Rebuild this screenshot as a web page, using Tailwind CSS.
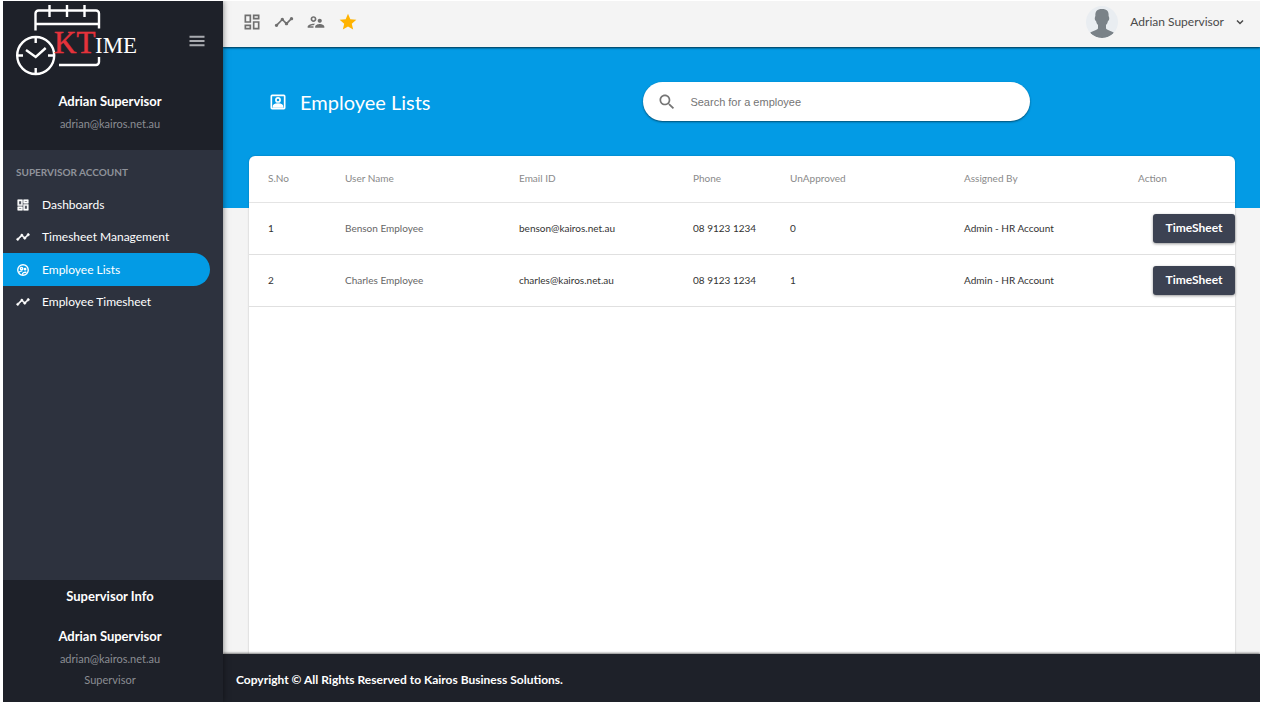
<!DOCTYPE html>
<html lang="en">
<head>
    <meta charset="UTF-8">
    <meta name="viewport" content="width=device-width, initial-scale=1.0">
    <title>KTime - Employee Lists</title>
    <script src="https://cdn.jsdelivr.net/npm/@tailwindcss/browser@4"></script>
</head>
<body class="h-screen bg-white pt-px pr-[2px] pb-[3px] pl-[3px] font-['Muli','Lato',sans-serif] text-[12px] text-[#3c4252]">

    <!-- Shared icons -->
    <svg class="hidden">
        <symbol id="dashboard" viewBox="0 0 24 24"><path d="M19 5v2h-4V5h4M9 5v6H5V5h4m10 8v6h-4v-6h4M9 17v2H5v-2h4M21 3h-8v6h8V3zM11 3H3v10h8V3zm10 8h-8v10h8V11zm-10 4H3v6h8v-6z"/></symbol>
        <symbol id="timeline" viewBox="0 0 24 24"><path d="M23 8c0 1.1-.9 2-2 2-.18 0-.35-.02-.51-.07l-3.56 3.55c.05.16.07.34.07.52 0 1.1-.9 2-2 2s-2-.9-2-2c0-.18.02-.36.07-.52l-2.55-2.55c-.16.05-.34.07-.52.07s-.36-.02-.52-.07l-4.55 4.56c.05.16.07.33.07.51 0 1.1-.9 2-2 2s-2-.9-2-2 .9-2 2-2c.18 0 .35.02.51.07l4.56-4.55C8.02 9.36 8 9.18 8 9c0-1.1.9-2 2-2s2 .9 2 2c0 .18-.02.36-.07.52l2.55 2.55c.16-.05.34-.07.52-.07s.36.02.52.07l3.55-3.56C19.02 8.35 19 8.18 19 8c0-1.1.9-2 2-2s2 .9 2 2z"/></symbol>
    </svg>

    <div class="flex h-full overflow-hidden">
        <!-- Sidebar -->
        <aside class="relative z-10 flex w-[220px] shrink-0 flex-col bg-[#2d323e] text-white shadow-[0_0_6px_rgba(0,0,0,0.5)]">
            <div class="h-[149px] bg-[#1e2129]">
                <div class="flex h-20 items-center justify-between pr-4 pl-3">
                    <svg class="h-20 w-[124px]" viewBox="0 0 124 80" fill="none" stroke="#fff" stroke-width="2.4">
                        <path d="M20.500 29.500V12.500a3 3 0 0 1 3-3h57.500a3 3 0 0 1 3 3v15M20.500 23h63.500M34.500 4v12M52 4v12M69.500 4v12M44 64h37a3 3 0 0 0 3-3v-5"/>
                        <circle cx="20.700" cy="54.500" r="18.500"/>
                        <path d="M11 49l9.700 7 10-9M20.700 37v5M20.700 67v5M3 54.500h5M33 54.500h5"/>
                        <g stroke="none" font-family="Liberation Serif, serif">
                            <text x="39" y="52" font-size="31" fill="#e5323b" stroke="#e5323b" stroke-width="0.5">KT</text>
                            <text x="80" y="52" font-size="23" fill="#fff">IME</text>
                        </g>
                    </svg>
                    <button type="button" aria-label="Toggle menu" class="text-[#a9abb0]">
                        <svg class="size-5" viewBox="0 0 24 24" fill="none" stroke="currentColor" stroke-width="2.400"><path d="M3 7h18M3 12h18M3 17h18"/></svg>
                    </button>
                </div>
                <div class="pt-3 pr-1.5 text-center text-[11px] leading-4 text-[#8b8d93]">
                    <p class="text-[13px] font-bold text-white">Adrian Supervisor</p>
                    <p class="mt-[7px]">adrian@kairos.net.au</p>
                </div>
            </div>

            <nav class="flex-1 pt-[7px]">
                <h2 class="flex h-8 items-center pb-0.5 pl-[13px] text-[10px] font-bold text-[#8f929a]">SUPERVISOR ACCOUNT</h2>
                <a href="#" class="flex h-8 items-center gap-3 pl-[13px]">
                    <svg class="size-3.5" fill="currentColor" stroke="currentColor"><use href="#dashboard"/></svg>Dashboards
                </a>
                <a href="#" class="flex h-8 items-center gap-3 pl-[13px]">
                    <svg class="size-3.5" fill="currentColor" stroke="currentColor"><use href="#timeline"/></svg>Timesheet Management
                </a>
                <a href="#" class="mr-[13px] flex h-[33px] items-center gap-3 rounded-r-full bg-[#039be5] pl-[13px]">
                    <svg class="size-3.5" viewBox="0 0 24 24" fill="none" stroke="currentColor" stroke-width="2.400">
                        <circle cx="12" cy="12" r="9"/><circle cx="9.500" cy="9.500" r="2"/><circle cx="15.500" cy="10.500" r="1.200"/><path d="M5 16c2-2 4-2.500 6-2.500M11 20c0-3 2-4.500 7-4"/>
                    </svg>Employee Lists
                </a>
                <a href="#" class="flex h-8 items-center gap-3 pl-[13px]">
                    <svg class="size-3.5" fill="currentColor" stroke="currentColor"><use href="#timeline"/></svg>Employee Timesheet
                </a>
            </nav>

            <div class="h-[122px] bg-[#1e2129] pt-2 pr-1.5 text-center text-[11px] leading-4 text-[#8b8d93]">
                <p class="text-[13px] font-bold text-white">Supervisor Info</p>
                <p class="mt-6 text-[13px] font-bold text-white">Adrian Supervisor</p>
                <p class="mt-[7px]">adrian@kairos.net.au</p>
                <p class="mt-[5px]">Supervisor</p>
            </div>
        </aside>

        <div class="flex min-w-0 flex-1 flex-col bg-[#f4f4f4]">
            <!-- Toolbar -->
            <header class="z-[5] flex h-[46px] shrink-0 items-center justify-between bg-[#f4f4f4] pr-3 pb-[5px] pl-[19px] text-[#6f6f6f] shadow-[0_1px_2px_rgba(0,0,0,0.7)]">
                <div class="flex gap-3">
                    <button type="button" aria-label="Dashboards"><svg class="size-5" fill="currentColor"><use href="#dashboard"/></svg></button>
                    <button type="button" aria-label="Timesheet Management"><svg class="size-5" fill="currentColor"><use href="#timeline"/></svg></button>
                    <button type="button" aria-label="Employees"><svg class="size-5" viewBox="0 0 24 24" fill="currentColor"><path d="M9 12c1.930 0 3.500-1.570 3.500-3.500S10.930 5 9 5 5.500 6.570 5.500 8.500 7.070 12 9 12zm0-5c.83 0 1.500.67 1.500 1.500S9.830 10 9 10s-1.500-.67-1.500-1.500S8.170 7 9 7zm.05 10H4.770c.99-.5 2.700-1 4.230-1 .11 0 .23.01.34.01.34-.73.93-1.330 1.640-1.810-.73-.13-1.420-.2-1.980-.2-2.340 0-7 1.170-7 3.500V19h7v-1.500c0-.17.02-.34.05-.5zm7.450-2.500c-1.840 0-5.500 1.010-5.500 3V19h11v-1.500c0-1.990-3.660-3-5.500-3zm1.210-1.820c.76-.43 1.290-1.240 1.290-2.180C19 9.120 17.880 8 16.500 8S14 9.120 14 10.500c0 .94.53 1.750 1.290 2.180.36.2.77.32 1.210.32s.85-.12 1.210-.32z"/></svg></button>
                    <button type="button" aria-label="Favourites" class="text-[#ffb300]"><svg class="size-5" viewBox="0 0 24 24" fill="currentColor"><path d="M12 17.270L18.180 21l-1.640-7.030L22 9.240l-7.190-.61L12 2 9.190 8.630 2 9.240l5.460 4.730L5.820 21z"/></svg></button>
                </div>
                <button type="button" class="flex items-center text-[#4a4a4a]">
                    <svg class="mr-3 size-8 rounded-full bg-[#e9edf1]" viewBox="0 0 32 32" fill="#7a8288"><path d="M16 3c5 0 7 2.500 6.600 7l.4 1c.6 1.500 0 3.500-1 4-.4 2-1.200 3-2 4v3.500c1.500 2 6 2.500 8 4.500-3 3.500-7 5-12 5s-9-1.500-12-5c2-2 6.500-2.500 8-4.500V19c-.8-1-1.600-2-2-4-1-.5-1.600-2.500-1-4l.4-1C9 5.500 11 3 16 3z"/></svg>
                    Adrian Supervisor
                    <svg class="ml-2 size-4" viewBox="0 0 16 16" fill="none" stroke="currentColor" stroke-width="1.500"><path d="M5 6.500l3 3 3-3"/></svg>
                </button>
            </header>

            <main class="flex min-h-0 flex-1 flex-col">
                <div class="h-[161px] shrink-0 bg-[#039be5] pr-[25px] pl-[26px]">
                    <div class="flex h-[109px] items-center">
                        <div class="flex w-2/5 items-center gap-3 pl-[19px] text-white">
                            <svg class="size-5" viewBox="0 0 24 24" fill="none" stroke="currentColor" stroke-width="2"><rect x="4" y="4" width="16" height="16" rx="1"/><circle cx="12" cy="9.500" r="2.500"/><path d="M6.500 18c0-2.500 3-3.500 5.500-3.500s5.500 1 5.500 3.500z" fill="currentColor"/></svg>
                            <h1 class="text-[20px]">Employee Lists</h1>
                        </div>
                        <div class="flex h-[39px] w-[387px] items-center rounded-full bg-white pl-[14px] shadow-[0_1px_2px_rgba(0,0,0,0.5)]">
                            <label for="search" aria-label="Search" class="text-[#757575]">
                                <svg class="size-5" viewBox="0 0 24 24" fill="currentColor"><path d="M15.500 14h-.79l-.28-.27C15.410 12.590 16 11.110 16 9.500 16 5.910 13.090 3 9.500 3S3 5.910 3 9.500 5.910 16 9.500 16c1.610 0 3.090-.59 4.230-1.570l.27.28v.79l5 4.990L20.490 19l-4.990-5zm-6 0C7.010 14 5 11.990 5 9.500S7.010 5 9.500 5 14 7.010 14 9.500 11.990 14 9.500 14z"/></svg>
                            </label>
                            <input id="search" type="text" placeholder="Search for a employee" class="h-full flex-1 px-[13px] font-['Liberation_Sans',sans-serif] text-[11px] outline-none placeholder:text-[#757575]">
                        </div>
                    </div>
                </div>

                <div class="mr-[25px] -mt-[52px] ml-[26px] min-h-0 flex-1 rounded-t-md bg-white shadow-[0_0_2px_rgba(0,0,0,0.25)]">
                    <table class="w-full table-fixed text-left text-[10px] text-[#333]">
                        <thead>
                            <tr class="h-[46px] border-b border-[#e4e4e4] text-[#8a8a8a]">
                                <th class="w-24 pl-[19px] font-normal">S.No</th>
                                <th class="font-normal">User Name</th>
                                <th class="font-normal">Email ID</th>
                                <th class="w-[97px] font-normal">Phone</th>
                                <th class="font-normal">UnApproved</th>
                                <th class="font-normal">Assigned By</th>
                                <th class="w-[97px] font-normal">Action</th>
                            </tr>
                        </thead>
                        <tbody>
                            <tr class="h-[52px] border-b border-[#e0e0e0]">
                                <td class="pl-[19px]">1</td>
                                <td class="text-[#666]">Benson Employee</td>
                                <td>benson@kairos.net.au</td>
                                <td>08 9123 1234</td>
                                <td>0</td>
                                <td>Admin - HR Account</td>
                                <td class="text-right"><button type="button" class="h-[29px] w-[82px] rounded-[3px] bg-[#3c4252] text-[12px] font-bold text-white shadow-[0_1px_3px_rgba(0,0,0,0.4)]">TimeSheet</button></td>
                            </tr>
                            <tr class="h-[52px] border-b border-[#e0e0e0]">
                                <td class="pl-[19px]">2</td>
                                <td class="text-[#666]">Charles Employee</td>
                                <td>charles@kairos.net.au</td>
                                <td>08 9123 1234</td>
                                <td>1</td>
                                <td>Admin - HR Account</td>
                                <td class="text-right"><button type="button" class="h-[29px] w-[82px] rounded-[3px] bg-[#3c4252] text-[12px] font-bold text-white shadow-[0_1px_3px_rgba(0,0,0,0.4)]">TimeSheet</button></td>
                            </tr>
                        </tbody>
                    </table>
                </div>
            </main>

            <footer class="flex h-12 shrink-0 items-center bg-[#1e2129] pt-[3px] pl-[13px] font-bold text-white shadow-[0_-1px_2px_rgba(0,0,0,0.5)]">
                Copyright © All Rights Reserved to Kairos Business Solutions.
            </footer>
        </div>
    </div>
</body>
</html>
